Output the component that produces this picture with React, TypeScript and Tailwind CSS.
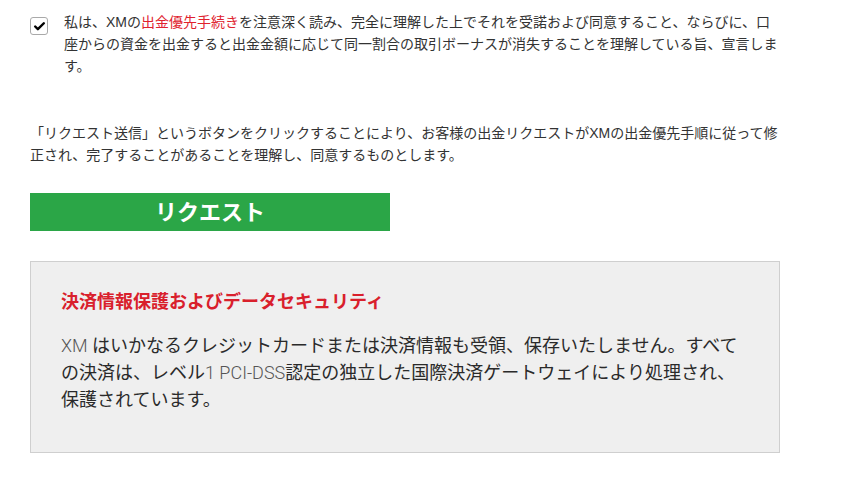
import { Check } from "lucide-react";

const jp = "font-['Liberation_Sans','Noto_Sans_CJK_JP',sans-serif]";
const jpBox = "font-['Roboto','Noto_Sans_CJK_JP',sans-serif]";

export default function App() {
  return (
    <div className={`min-h-screen bg-white text-[#333] ${jp}`}>
      <div className="w-[750px] ml-[30px] pt-[11px]">
        {/* declaration with checkbox */}
        <div className="flex items-start">
          <div className="w-[34px] pt-[6px] shrink-0">
            <span className="flex h-[18px] w-[18px] items-center justify-center rounded-[3px] border border-[#a9a9a9] bg-white">
              <Check className="h-[13px] w-[13px] text-black" strokeWidth={4.5} />
            </span>
          </div>
          <p className="text-[14px] leading-[22px]">
            私は、XMの<span className="text-[#e0222e]">出金優先手続き</span>
            を注意深く読み、完全に理解した上でそれを受諾および同意すること、ならびに、口座からの資金を出金すると出金金額に応じて同一割合の取引ボーナスが消失することを理解している旨、宣言します。
          </p>
        </div>

        <p className="mt-[45px] text-[14px] leading-[22px]">
          「リクエスト送信」というボタンをクリックすることにより、お客様の出金リクエストがXMの出金優先手順に従って修正され、完了することがあることを理解し、同意するものとします。
        </p>

        <button
          type="button"
          className="mt-[27px] flex h-[38px] w-[360px] items-center justify-center bg-[#2ba647] text-[22px] font-bold text-white"
        >
          リクエスト
        </button>

        {/* security notice */}
        <div className="mt-[30px] border border-[#cfcfcf] bg-[#efefef] px-[30px] pt-[27px] pb-[39px]">
          <h3 className={`text-[18px] font-bold leading-[27px] text-[#d9202c] ${jp}`}>
            決済情報保護およびデータセキュリティ
          </h3>
          <p className={`mt-[16px] text-[18px] leading-[27px] text-[#2a2a2a] ${jpBox}`}>
            <span className="font-light text-[#555]">XM</span> はいかなるクレジットカードまたは決済情報も受領、保存いたしません。すべての決済は、レベル<span className="font-light text-[#555]">1 PCI-DSS</span>認定の独立した国際決済ゲートウェイにより処理され、保護されています。
          </p>
        </div>
      </div>
    </div>
  );
}
